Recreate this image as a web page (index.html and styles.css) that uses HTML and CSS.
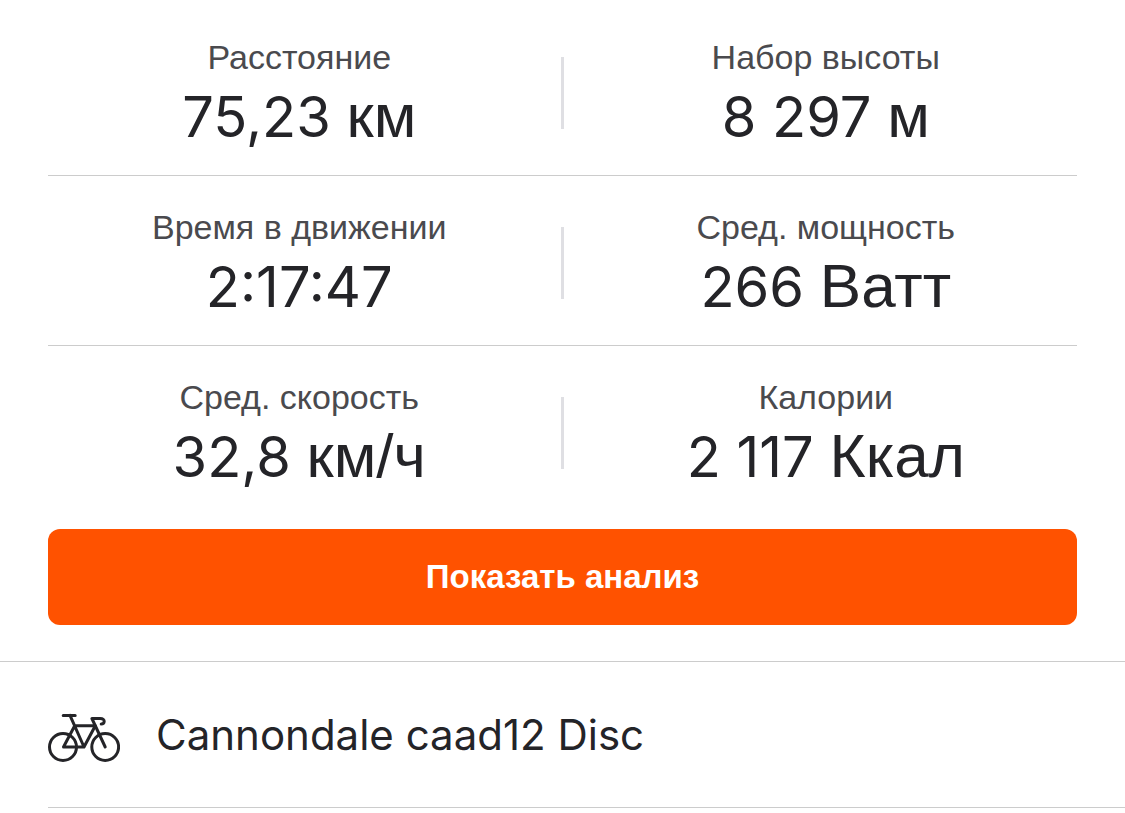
FILE: index.html
```html
<!DOCTYPE html>
<html lang="ru">
<head>
    <meta charset="UTF-8">
    <meta name="viewport" content="width=device-width, initial-scale=1.0">
    <title>Тренировка</title>
    <link rel="stylesheet" href="styles.css">
</head>
<body>
    <main class="summary">
        <dl class="stats">
            <div class="row">
                <div class="stat">
                    <dt>Расстояние</dt>
                    <dd>75,23 <span class="unit">км</span></dd>
                </div>
                <div class="stat">
                    <dt>Набор высоты</dt>
                    <dd>8 297 <span class="unit">м</span></dd>
                </div>
            </div>
            <div class="row">
                <div class="stat">
                    <dt>Время в движении</dt>
                    <dd>2:17:47</dd>
                </div>
                <div class="stat">
                    <dt>Сред. мощность</dt>
                    <dd>266 <span class="unit">Ватт</span></dd>
                </div>
            </div>
            <div class="row">
                <div class="stat">
                    <dt>Сред. скорость</dt>
                    <dd>32,8 <span class="unit">км/ч</span></dd>
                </div>
                <div class="stat">
                    <dt>Калории</dt>
                    <dd>2 117 <span class="unit">Ккал</span></dd>
                </div>
            </div>
        </dl>
        <button class="analysis" type="button">Показать анализ</button>
    </main>

    <section class="gear">
        <div class="gear-item">
            <svg class="bike" viewBox="0 -1 72 72" aria-hidden="true">
                <circle cx="15" cy="47" r="13.5"/>
                <circle cx="57.2" cy="47" r="13.4"/>
                <path d="M15.2 15.4H27.2M22 15.4L36 47H15.5L26.7 25.7H47.3L36 47"/>
                <path d="M57.2 47L43.9 18.5H52.2C55 18.5 56.3 19.8 56.2 21.3C56.1 23 54.9 24 53.2 24"/>
            </svg>
            <span class="gear-name">Cannondale caad12 Disc</span>
        </div>
    </section>
</body>
</html>
```

FILE: styles.css
```css
* {
    box-sizing: border-box;
}
body {
    margin: 0;
    background: #fff;
    color: #242428;
    font-family: "Liberation Sans", Arial, sans-serif;
}
.summary {
    padding: 6px 48px 36px;
}
.stats {
    margin: 0;
}
.row {
    display: flex;
    gap: 24px;
    position: relative;
    padding: 31px 0 26px;
    border-bottom: 1px solid #ccc;
}
.row:last-child {
    padding-bottom: 40px;
    border-bottom: none;
}
/* short divider between the two columns */
.row::after {
    content: "";
    position: absolute;
    top: 51px;
    left: 50%;
    width: 3px;
    height: 72px;
    margin-left: -2px;
    background: #dfdfe3;
}
.stat {
    flex: 1;
    text-align: center;
}
dt {
    font-size: 34px;
    line-height: 40px;
    color: #4a4a4e;
}
dd {
    height: 64px;
    margin: 8px 0 0;
    font-family: Inter, "Liberation Sans", sans-serif;
    font-size: 56px;
    line-height: 64px;
}
.unit {
    font-family: "Liberation Sans", Arial, sans-serif;
    font-size: 62px;
    line-height: 56px;
}
.analysis {
    display: block;
    width: 100%;
    height: 96px;
    border: none;
    border-radius: 12px;
    background: #ff5200;
    color: #fff;
    font-family: inherit;
    font-size: 33px;
    font-weight: bold;
    cursor: pointer;
}
.gear {
    border-top: 1px solid #ccc;
    padding-left: 48px;
}
.gear-item {
    display: flex;
    align-items: center;
    gap: 36px;
    height: 146px;
    border-bottom: 1px solid #ccc;
}
.bike {
    width: 72px;
    height: 72px;
    fill: none;
    stroke: #242428;
    stroke-width: 3;
    stroke-linecap: round;
    stroke-linejoin: round;
}
.gear-name {
    font-family: Inter, "Liberation Sans", sans-serif;
    font-size: 42px;
    line-height: 56px;
}
```
